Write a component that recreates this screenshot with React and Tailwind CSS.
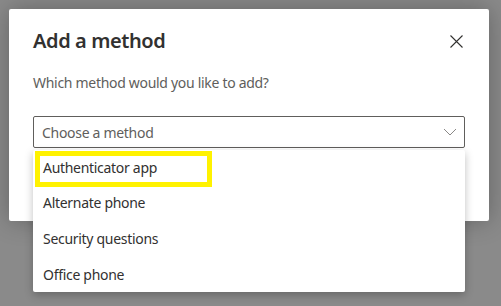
import React from "react"

const ChevronDown = () => (
    <svg width="14" height="8" viewBox="0 0 14 8" fill="none">
        <path d="M1 1L7 7L13 1" stroke="#8a8886" strokeWidth="1" />
    </svg>
)

const CloseIcon = () => (
    <svg width="13" height="13" viewBox="0 0 13 13" fill="none">
        <path d="M0.5 0.5L12.5 12.5M12.5 0.5L0.5 12.5" stroke="#323130" strokeWidth="1.1" />
    </svg>
)

const options = ["Alternate phone", "Security questions", "Office phone"]

const App = () => {
    return (
        <div
            className="relative w-[501px] h-[306px] overflow-hidden bg-[#8a8a8a] pl-[9px] pt-[9px]"
            style={{ fontFamily: '"Noto Sans", "Open Sans", sans-serif' }}
        >
            <div className="w-[480px] h-[212px] bg-white rounded-[2px] shadow-[0_0_24px_rgba(0,0,0,0.28)] pl-[24px] pr-[24px] pt-[18px]">
                <div className="flex items-center justify-between h-[28px]">
                    <h2 className="text-[20px] leading-[28px] font-semibold tracking-[-0.4px] text-[#323130]">
                        Add a method
                    </h2>
                    <button className="w-[16px] h-[16px] flex items-center justify-center mr-[1px]">
                        <CloseIcon />
                    </button>
                </div>
                <p className="mt-[18px] text-[14px] leading-[20px] tracking-[-0.3px] text-[#605e5c]">
                    Which method would you like to add?
                </p>
                <div className="mt-[23px] h-[32px] border border-[#605e5c] rounded-[2px] flex items-center justify-between pl-[8px] pr-[7px]">
                    <span className="text-[14px] tracking-[-0.3px] text-[#605e5c]">Choose a method</span>
                    <ChevronDown />
                </div>
            </div>

            <div className="absolute left-[33px] top-[150px] w-[432px] h-[142px] bg-white shadow-[0_3px_8px_rgba(0,0,0,0.25)] rounded-[2px]">
                <div className="h-[36px] pl-[2px] pt-[1px]">
                    <div className="w-[177px] h-[36px] border-[5px] border-[#fff200] pl-[3px] pb-[3px] flex items-center">
                        <span className="text-[14px] tracking-[-0.3px] text-[#323130]">Authenticator app</span>
                    </div>
                </div>
                {options.map((o) => (
                    <div key={o} className="h-[36px] pl-[10px] pb-[3px] flex items-center">
                        <span className="text-[14px] tracking-[-0.3px] text-[#323130]">{o}</span>
                    </div>
                ))}
            </div>
        </div>
    )
}

export default App
